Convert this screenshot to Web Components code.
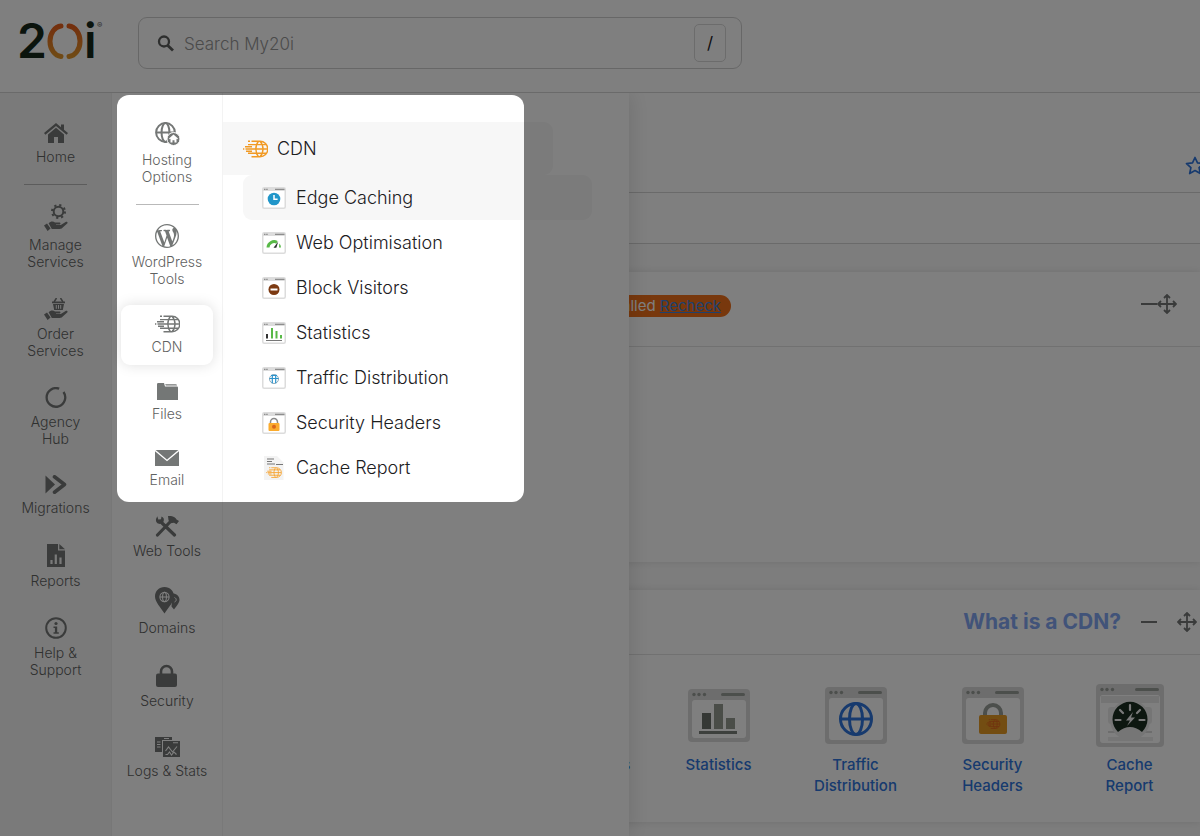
<!DOCTYPE html>
<html lang="en">
<head>
<meta charset="utf-8">
<meta name="viewport" content="width=device-width, initial-scale=1">
<title>My20i – CDN</title>
<style>
  html, body { margin: 0; }
  body { font-family: Inter, "Open Sans", sans-serif; color: #1c201e; background: #fbfbfb; overflow: hidden; }
</style>
</head>
<body>
<my-app></my-app>

<script>
const globe = (cx, cy, r, w) => `<g fill="none" stroke="currentColor" stroke-width="${w}">
  <circle cx="${cx}" cy="${cy}" r="${r}"/><ellipse cx="${cx}" cy="${cy}" rx="${r * 0.42}" ry="${r}"/>
  <path d="M${cx - r} ${cy}H${cx + r}"/></g>`;

const hand = `<path d="M0 19.5l3-2 3.6 5-3 2.5zM4.6 17.2c2-2 4.600-2 6.400-.8h4.500c1.300 0 1.300 2 0 2h-3.500v.7h4.800l4.800-3.200c1.300-.8 2.600.5 1.600 1.600l-5 4.600c-.8.7-1.500.9-2.500.9H7.800z"/>`;

const fastGlobe = `<g fill="none" stroke="currentColor" stroke-width="1.4">
  <path d="M8.500 1.200H17a7.800 7.800 0 0 1 0 15.600H8.500M17 1.200c4 4 4 11.600 0 15.600M15.500 1.200c-3.500 4-3.500 11.600 0 15.600"/>
  <path d="M5 4.600h18M2.500 9h22M5 13.300h18M0 9h1.300M2 6.800h7M3 11.200h6M5 1.200h2"/></g>`;

/* Small browser-window frame shared by the CDN menu icons. */
const win = inner => `<rect x=".75" y=".75" width="22.500" height="20.500" rx="1.500" fill="#fff" stroke="#dcdcdc" stroke-width="1.500"/>
  <path d="M1 1h22v3H1z" fill="#dcdcdc"/><path d="M2 2.300h1.500M4.200 2.300h1.500M13 2.300h9.500" stroke="#8d8d8d" stroke-width="1.200"/>${inner}`;

/* Large browser-window frame for the dashboard tiles. */
const bigWin = (w, h, inner) => `<rect width="${w}" height="${h}" rx="4" fill="#dadada"/>
  <rect x="4" y="11" width="${w - 8}" height="${h - 15}" rx="3" fill="#fff"/>
  <g fill="#999e99"><circle cx="6" cy="5.500" r="1.700"/><circle cx="11" cy="5.500" r="1.700"/><circle cx="16.500" cy="5.500" r="1.700"/>
  <rect x="${w - 29}" y="4" width="24" height="3" rx="1.500"/></g>${inner}`;

const ICONS = {
  home: [24, 20, `<path d="M12 0l5 4.200V1.500h3v5.200l4 3.400-1.400 1.700L12 3 1.400 11.800 0 10.100z"/><path d="M12 4.800l8 6.700V20h-6v-6h-4v6H4v-8.500z"/>`],
  manage: [24, 27, `<g fill="none" stroke="currentColor"><circle cx="14.500" cy="7.500" r="4.800" stroke-width="2"/><circle cx="14.500" cy="7.500" r="6.500" stroke-width="2" stroke-dasharray="2.200 2.900"/></g><g transform="translate(0 2)">${hand}</g>`],
  order: [24, 22, `<path d="M8 3.500h13v1.800H8zM9 6h11l-1.200 6h-8.600z"/><path d="M10 4l2.500-4M19 4l-2.500-4" fill="none" stroke="currentColor" stroke-width="1.500"/><path d="M12.300 7v3.800M14.500 7v3.800M16.700 7v3.800" stroke="#f4f4f4" stroke-width="1"/><g transform="translate(0 -3)">${hand}</g>`],
  agency: [22, 21, `<path d="M14.200 1.700A9.300 9.300 0 1 0 18.500 5" fill="none" stroke="currentColor" stroke-width="2.300"/>`],
  migrations: [22, 19, `<path d="M.5.500L10 9.500.5 18.500z"/><path d="M9.500 1.800L19.500 9.500l-10 7.700" fill="none" stroke="currentColor" stroke-width="3.600" stroke-linecap="round" stroke-linejoin="round"/>`],
  reports: [18, 23, `<path d="M0 0h11v6.500h7V23H0z"/><path d="M12.300 0L18 5.300h-5.700z"/><path d="M4.500 20v-4M8.800 20V10.500M13.500 20v-6.500" stroke="#f4f4f4" stroke-width="2.200"/>`],
  help: [22, 22, `<circle cx="11" cy="11" r="9.800" fill="none" stroke="currentColor" stroke-width="2"/><circle cx="11" cy="6.500" r="1.600"/><path d="M8.500 9.500h3.700v5.700h1.600v1.500H8.500v-1.500h1.400V11H8.500z"/>`],
  hosting: [25, 24, `${globe(10.5, 10.5, 9.4, 2)}<circle cx="18.500" cy="17" r="6.500" stroke="#fff"/><path d="M18.500 12.500l4.500 4-.7.8-.8-.6v3.800h-2v-2.200h-2v2.200h-2v-3.800l-.8.6-.7-.8z" fill="#fff"/>`],
  wordpress: [24, 24, `<path transform="scale(1.200)" d="M20 10c0-5.510-4.490-10-10-10C4.480 0 0 4.490 0 10c0 5.520 4.480 10 10 10 5.510 0 10-4.480 10-10zM7.780 15.370L4.370 6.220c.55-.02 1.170-.08 1.170-.08.5-.06.44-1.130-.06-1.110 0 0-1.450.11-2.370.11-.18 0-.37 0-.58-.01C4.120 2.690 6.870 1.110 10 1.110c2.330 0 4.450.87 6.050 2.340-.68-.11-1.650.39-1.650 1.580 0 .74.45 1.360.9 2.100.35.610.55 1.360.55 2.460 0 1.490-1.400 5-1.400 5l-3.030-8.370c.54-.02.82-.17.82-.17.5-.05.44-1.250-.06-1.220 0 0-1.440.12-2.380.12-.87 0-2.330-.12-2.330-.12-.5-.03-.56 1.200-.06 1.220l.92.08 1.260 3.410zM17.410 10c.24-.64.74-1.870.43-4.250.7 1.290 1.050 2.710 1.050 4.250 0 3.290-1.730 6.240-4.400 7.780.97-2.590 1.940-5.200 2.920-7.780zM6.100 18.090C3.120 16.650 1.110 13.530 1.110 10c0-1.300.23-2.480.72-3.590C3.250 10.300 4.670 14.200 6.100 18.090zm4.030-6.630l2.580 6.980c-.86.29-1.760.45-2.710.45-.79 0-1.570-.11-2.290-.33.810-2.380 1.620-4.740 2.420-7.100z"/>`],
  cdn: [25, 18, fastGlobe],
  files: [21, 17, `<path d="M0 1.200Q0 0 1.200 0H7l1 3.500h12Q21 3.500 21 4.700V17H0z"/><path d="M8.200 1.300H18.500q1.500 0 1.500 1.200H8.800z"/>`],
  email: [24, 16, `<path d="M0 0h24v16H0z"/><path d="M0 .3L12 10.500 24 .3" fill="none" stroke="#fff" stroke-width="1.300"/>`],
  tools: [24, 21, `<path d="M2.500 19l13-13.500M19.500 19L7 7" fill="none" stroke="currentColor" stroke-width="3.200" stroke-linecap="round"/><path d="M13 0c4-.5 7.500 1 8.500 3.500L24 5l-2.500 3.300-2.500-1.500-3.500.4-2-3z"/><path d="M2.300.3l1 3.200L6 3.200 6.500.6C9 1.700 9.500 4 8.300 6L6 7.800C2.800 8.300.5 6.500 1 3z"/>`],
  domains: [25, 27, `<path d="M17.500 6.500c4 0 7 2.500 7 6.300 0 3-3 6.500-5.500 9.700l-2.500-3z"/><path d="M9.500 0C15 0 19 4 19 9.500 19 15 13.500 20 9.500 26.500 5.500 20 0 15 0 9.500 0 4 4 0 9.500 0z"/><g color="#fff">${globe(9.5, 10, 4.6, 1.1)}</g><path d="M19.500 10.500c2.500 1 2 4 0 4.500" stroke="#fff" fill="none"/>`],
  security: [22, 23, `<rect y="9.500" width="21" height="13.500" rx="2"/><path d="M5 10.500V7.500a5.500 5.500 0 0 1 11 0v3" fill="none" stroke="currentColor" stroke-width="2.600"/>`],
  logs: [25, 20, `<path d="M0 0h17v3H7v12H0z"/><path d="M2 5h3.500M2 7.500h3.500M2 10h3.500M9 1.500h5" stroke="#fff" stroke-width="1"/><path d="M8 4h17v16H8z"/><path d="M10.500 14l3-4 4 5 4.500-5.500M10.500 17.500h2l2-2.500 2 3 2.500-3 2.500 2.500M18 5.700h5" fill="none" stroke="#fff" stroke-width="1.100"/>`],
  search: [18, 17, `<circle cx="7" cy="6.500" r="5" fill="none" stroke="currentColor" stroke-width="2.300"/><path d="M10.500 10.200l5.500 5.300" stroke="currentColor" stroke-width="2.800"/>`],
  star: [20, 20, `<path d="M10 1.500l2.500 5.400 6 .7-4.400 4 1.200 5.900-5.300-2.900-5.300 2.900 1.200-5.900-4.400-4 6-.7z" fill="none" stroke="currentColor" stroke-width="1.700" stroke-linejoin="round"/>`],
  minus: [16, 20, `<path d="M0 10h16" stroke="currentColor" stroke-width="2"/>`],
  move: [20, 20, `<path d="M10 1.500v17M1.500 10h17M7 4l3-3 3 3M7 16l3 3 3-3M4 7l-3 3 3 3M16 7l3 3-3 3" fill="none" stroke="currentColor" stroke-width="1.800"/>`],

  edge: [24, 22, win(`<circle cx="12" cy="12" r="6.300" fill="#2196c9"/><path d="M12 8v4.300h3.600" fill="none" stroke="#fff" stroke-width="1.500"/>`)],
  optimise: [24, 22, win(`<path d="M6 15.500a6.200 6.200 0 0 1 9-5.200" fill="none" stroke="#58b947" stroke-width="3"/><path d="M11.500 15.800l4.800-6.300-2 6.300z" fill="#2b332e"/><path d="M17.300 11.500a6 6 0 0 1 1.700 4h-2z" fill="#58b947"/>`)],
  block: [24, 22, win(`<circle cx="12" cy="12.500" r="5.500" fill="#7c3a12"/><path d="M8.500 12.500h7" stroke="#fff" stroke-width="2"/>`)],
  stats: [24, 22, win(`<path d="M5 12v4.500" stroke="#333" stroke-width="2"/><path d="M10 6v10.500M14.500 9v7.500M19 13v3.500" stroke="#58b947" stroke-width="2"/><path d="M4 18.500h16" stroke="#777"/>`)],
  traffic: [24, 22, win(`<g fill="none" stroke="#2b93cc" stroke-width="1.200"><circle cx="12" cy="12" r="4.500" stroke="#8aa9ba" stroke-width="1"/><path d="M7.500 11.500h9M10.300 7.700v8.500M13.700 7.700v8.500M9 8.500h6"/></g>`)],
  headers: [24, 22, win(`<path d="M8.500 12V10a3.500 3.500 0 0 1 7 0v2" fill="none" stroke="#8a8a8a" stroke-width="1.500"/><rect x="6.500" y="11" width="11" height="8" rx="1" fill="#fbab2d"/><circle cx="12" cy="14.800" r="2" fill="#d9661b"/>`)],
  report: [24, 24, `<path d="M2 0h13l6.500 6.500V24H2z" fill="#f3f3f3"/><path d="M5 3h7M5 5.500h5M5 8h8M14 8.500h7" stroke="#777" stroke-width="1.100"/><g color="#f7a12b" transform="translate(4 11) scale(.620)">${fastGlobe}</g>`],

  bigStats: [62, 53, bigWin(62, 53, `<rect x="14" y="24" width="9" height="16" fill="#6a706b"/><rect x="26" y="15" width="9" height="25" fill="#949b90"/><rect x="38" y="29" width="9" height="11" fill="#949b90"/><path d="M11 43.500h38" stroke="#7b807b" stroke-width="3"/>`)],
  bigTraffic: [62, 57, bigWin(62, 57, `<g color="#2e75dc">${globe(31, 32, 15.5, 3)}</g>`)],
  bigHeaders: [62, 57, bigWin(62, 57, `<path d="M23 29v-3a8 8 0 0 1 16 0v3" fill="none" stroke="#999e99" stroke-width="4"/><rect x="17" y="28" width="28" height="19" rx="2" fill="#e69a24"/><g color="#e2611d" transform="translate(24 32) scale(.560)">${fastGlobe}</g>`)],
  bigReport: [68, 63, bigWin(68, 63, `<path d="M5 12h58v7H5z" fill="#e8e8e8"/><rect x="12" y="23" width="44" height="17" rx="3" fill="#ebebeb"/><path d="M12 48h16M44 48h12" stroke="#dadada" stroke-width="2"/><path d="M12 55h45" stroke="#ececec" stroke-width="4"/><circle cx="34" cy="36" r="20" fill="#ececec"/><path d="M22 48a17.500 17.500 0 1 1 24 0q-12-10-24 0z" fill="#1b2e21"/><path d="M34 21v5M19.500 36h5M43.500 36h5M24 26l3 3M44 26l-3 3" stroke="#f4f4f4" stroke-width="2.200" stroke-linecap="round"/><path d="M37 28l-7 8.500h4L31 42l8-8.500h-4z" fill="#f4f4f4"/>`)]
};

class MyIcon extends HTMLElement {
  connectedCallback() {
    const [w, h, body] = ICONS[this.getAttribute('name')];
    this.attachShadow({ mode: 'open' }).innerHTML = `
      <style>:host { display: inline-flex; flex: none; } svg { display: block; }</style>
      <svg width="${w}" height="${h}" viewBox="0 0 ${w} ${h}" fill="currentColor" aria-hidden="true">${body}</svg>`;
  }
}

class MyLogo extends HTMLElement {
  connectedCallback() {
    this.attachShadow({ mode: 'open' }).innerHTML = `
      <style>
        :host { display: block; }
        a { display: block; color: #16291b; }
        svg { display: block; }
        text { font-family: Inter, sans-serif; font-weight: 600; }
      </style>
      <a href="#" aria-label="20i home"><svg width="92" height="64" viewBox="-4 -12 92 64" fill="currentColor">
        <defs><linearGradient id="g" x1="0" y1="0" x2="0" y2="1"><stop offset="0" stop-color="#e8601c"/><stop offset="1" stop-color="#e0952a"/></linearGradient></defs>
        <text x="-3" y="37" font-size="48">2</text>
        <path d="M41 5a12 15.300 0 0 0 0 30.500M49 5a12 15.300 0 0 1 0 30.500" fill="none" stroke="url(#g)" stroke-width="5" stroke-linecap="round"/>
        <text x="64" y="37" font-size="48">i</text>
        <text x="77" y="7" font-size="8" fill="#666">®</text>
      </svg></a>`;
  }
}

class MyHeader extends HTMLElement {
  connectedCallback() {
    this.attachShadow({ mode: 'open' }).innerHTML = `
      <style>
        :host { display: flex; align-items: center; gap: 30px; height: 92px; padding: 0 16px; background: #fff; border-bottom: 1px solid #d4d4d4; }
        my-logo { margin-bottom: 10px; }
        form { flex: 1; max-width: 604px; height: 52px; box-sizing: border-box; margin: 0 0 6px; padding: 0 15px 0 18px; display: flex; align-items: center; gap: 9px; border: 1px solid #cfcfcf; border-radius: 9px; color: #5c5e5d; }
        input { flex: 1; min-width: 0; border: 0; outline: 0; padding: 1px 0 0; background: none; font: 300 17px Inter, sans-serif; color: inherit; }
        input::placeholder { color: #969696; opacity: 1; }
        kbd { width: 30px; height: 36px; display: grid; place-items: center; border: 1px solid #d8d8d8; border-radius: 5px; font: 400 17px Inter, sans-serif; color: #1c201e; }
      </style>
      <my-logo></my-logo>
      <form role="search"><my-icon name="search"></my-icon><input type="text" placeholder="Search My20i" aria-label="Search My20i"><kbd>/</kbd></form>`;
  }
}

class NavItem extends HTMLElement {
  connectedCallback() {
    this.attachShadow({ mode: 'open' }).innerHTML = `
      <style>
        :host { display: block; border-radius: 9px; }
        :host([active]) { background: #fff; box-shadow: 0 0 14px rgba(0, 0, 0, .13); }
        a { display: flex; flex-direction: column; align-items: center; gap: 5px; padding: 10px 0; color: #747776; text-decoration: none; font-size: 14px; font-weight: 300; line-height: 17px; text-align: center; }
        span { color: #5f6261; }
      </style>
      <a href="#"><my-icon name="${this.getAttribute('icon')}"></my-icon><span><slot></slot></span></a>`;
  }
}

class NavColumn extends HTMLElement {
  connectedCallback() {
    this.attachShadow({ mode: 'open' }).innerHTML = `
      <style>
        :host { display: block; box-sizing: border-box; padding: 20px 9px 0; }
        nav { display: flex; flex-direction: column; gap: 8px; }
        ::slotted(hr) { width: 63px; height: 1px; margin: 1px auto; border: 0; background: #b9b9b9; }
      </style>
      <nav><slot></slot></nav>`;
  }
}

class MenuRow extends HTMLElement {
  connectedCallback() {
    this.attachShadow({ mode: 'open' }).innerHTML = `
      <style>
        :host { display: block; margin: 0 37px 0 20px; border-radius: 9px; }
        :host([active]) { background: #f7f7f7; }
        :host([heading]) { margin: 0 76px 0 0; border-radius: 0 9px 9px 0; background: #f7f7f7; }
        a { display: flex; align-items: center; gap: 10px; height: 45px; padding-left: 19px; color: #1c201e; text-decoration: none; font-size: 18px; font-weight: 300; line-height: 22px; }
        :host([heading]) a { height: 53px; padding-left: 20px; gap: 9px; }
        :host([heading]) my-icon { color: #f19a25; }
      </style>
      <a href="#"><my-icon name="${this.getAttribute('icon')}"></my-icon><slot></slot></a>`;
  }
}

class FlyoutMenu extends HTMLElement {
  connectedCallback() {
    this.attachShadow({ mode: 'open' }).innerHTML = `
      <style>
        :host { display: grid; grid-template-columns: 111px 406px; background: #fff; box-shadow: 0 0 22px rgba(0, 0, 0, .14); clip-path: inset(0 -30px 0 0); }
        nav-column { border-right: 1px solid #f3f3f3; padding-top: 19px; }
        section { padding-top: 29px; }
      </style>
      <nav-column>
        <nav-item icon="hosting">Hosting<br>Options</nav-item><hr>
        <nav-item icon="wordpress">WordPress<br>Tools</nav-item>
        <nav-item icon="cdn" active>CDN</nav-item>
        <nav-item icon="files">Files</nav-item>
        <nav-item icon="email">Email</nav-item>
        <nav-item icon="tools">Web Tools</nav-item>
        <nav-item icon="domains">Domains</nav-item>
        <nav-item icon="security">Security</nav-item>
        <nav-item icon="logs">Logs &amp; Stats</nav-item>
      </nav-column>
      <section>
        <menu-row icon="cdn" heading>CDN</menu-row>
        <menu-row icon="edge" active>Edge Caching</menu-row>
        <menu-row icon="optimise">Web Optimisation</menu-row>
        <menu-row icon="block">Block Visitors</menu-row>
        <menu-row icon="stats">Statistics</menu-row>
        <menu-row icon="traffic">Traffic Distribution</menu-row>
        <menu-row icon="headers">Security Headers</menu-row>
        <menu-row icon="report">Cache Report</menu-row>
      </section>`;
  }
}

class DashCard extends HTMLElement {
  connectedCallback() {
    this.attachShadow({ mode: 'open' }).innerHTML = `
      <style>
        :host { display: block; margin-top: 28px; background: #fff; box-shadow: 0 0 8px rgba(0, 0, 0, .11); }
        header { display: flex; align-items: center; gap: 20px; height: 64px; padding-right: 3px; border-bottom: 1px solid #e2e2e2; }
        .lead { flex: 1; }
        .tools { display: flex; gap: 20px; }
        button { padding: 0; border: 0; background: none; color: #747776; display: flex; }
        :host([compact]) header { height: 74px; padding-right: 23px; }
        :host([compact]) .tools { gap: 0; padding-bottom: 10px; }
        .body { min-height: 215px; }
        :host(:not([compact])) .body { min-height: 167px; }
      </style>
      <header>
        <div class="lead"><slot name="title"></slot></div>
        <div class="tools"><button type="button" aria-label="Collapse"><my-icon name="minus"></my-icon></button><button type="button" aria-label="Move"><my-icon name="move"></my-icon></button></div>
      </header>
      <div class="body"><slot></slot></div>`;
  }
}

class StatusPill extends HTMLElement {
  connectedCallback() {
    this.attachShadow({ mode: 'open' }).innerHTML = `
      <style>
        :host { display: flex; justify-content: flex-end; width: 619px; padding-bottom: 6px; box-sizing: border-box; }
        p { margin: 0; padding: 0 10px; border-radius: 11px; background: #f0701a; color: #fff; font-size: 15px; line-height: 22px; }
        a { color: #3f83dd; }
      </style>
      <p><slot></slot> <a href="#">Recheck</a></p>`;
  }
}

class AppTile extends HTMLElement {
  connectedCallback() {
    this.attachShadow({ mode: 'open' }).innerHTML = `
      <style>
        :host { display: block; width: 137px; flex: none; }
        a { display: flex; flex-direction: column; align-items: center; gap: 5px; color: #2e75dc; text-decoration: none; text-align: center; font-size: 15px; font-weight: 500; line-height: 21px; }
        .pic { height: 68px; display: flex; align-items: center; }
      </style>
      <a href="#"><span class="pic"><my-icon name="${this.getAttribute('icon')}"></my-icon></span><span><slot></slot></span></a>`;
  }
}

class MyApp extends HTMLElement {
  connectedCallback() {
    this.attachShadow({ mode: 'open' }).innerHTML = `
      <style>
        :host { display: block; position: relative; min-height: 100vh; overflow: hidden; }
        .shell { position: relative; display: grid; grid-template-columns: 112px 1fr; min-height: calc(100vh - 93px); }
        .primary { position: relative; z-index: 1; background: #f5f5f5; border-right: 1px solid #eee; }
        flyout-menu { position: absolute; top: 0; bottom: 0; left: 112px; }
        main { min-width: 0; }
        .title { height: 99px; display: flex; justify-content: flex-end; align-items: flex-end; background: #fff; border-bottom: 1px solid #d4d4d4; }
        .title button { margin: 0 -5px 16px 0; padding: 0; border: 0; background: none; color: #2e75dc; display: flex; }
        .crumbs { height: 50px; background: #fff; border-bottom: 1px solid #d4d4d4; }
        h2 { margin: 0; text-align: right; font-size: 21px; line-height: 26px; font-weight: 700; }
        h2 a { color: #82a6f2; text-decoration: none; }
        .tiles { display: flex; justify-content: flex-end; padding: 26px 2px 26px 0; }
        /* Guided-tour spotlight: one lit window, everything round it dimmed. */
        .spotlight { position: absolute; z-index: 2; left: 117px; top: 95px; width: 407px; height: 407px; border-radius: 12px; box-shadow: 0 0 0 200vmax rgba(0, 0, 0, .5); pointer-events: none; }
      </style>
      <my-header></my-header>
      <div class="shell">
        <nav-column class="primary">
          <nav-item icon="home">Home</nav-item><hr>
          <nav-item icon="manage">Manage<br>Services</nav-item>
          <nav-item icon="order">Order<br>Services</nav-item>
          <nav-item icon="agency">Agency<br>Hub</nav-item>
          <nav-item icon="migrations">Migrations</nav-item>
          <nav-item icon="reports">Reports</nav-item>
          <nav-item icon="help">Help &amp;<br>Support</nav-item>
        </nav-column>
        <main>
          <div class="title"><button type="button" aria-label="Favourite"><my-icon name="star"></my-icon></button></div>
          <div class="crumbs"></div>
          <dash-card compact><status-pill slot="title">Not installed</status-pill></dash-card>
          <dash-card>
            <h2 slot="title"><a href="#">What is a CDN?</a></h2>
            <div class="tiles">
              <app-tile icon="bigStats">Block Visitors</app-tile>
              <app-tile icon="bigStats">Statistics</app-tile>
              <app-tile icon="bigTraffic">Traffic<br>Distribution</app-tile>
              <app-tile icon="bigHeaders">Security<br>Headers</app-tile>
              <app-tile icon="bigReport">Cache<br>Report</app-tile>
            </div>
          </dash-card>
        </main>
        <flyout-menu></flyout-menu>
      </div>
      <div class="spotlight"></div>`;
  }
}

customElements.define('my-icon', MyIcon);
customElements.define('my-logo', MyLogo);
customElements.define('my-header', MyHeader);
customElements.define('nav-item', NavItem);
customElements.define('nav-column', NavColumn);
customElements.define('menu-row', MenuRow);
customElements.define('flyout-menu', FlyoutMenu);
customElements.define('dash-card', DashCard);
customElements.define('status-pill', StatusPill);
customElements.define('app-tile', AppTile);
customElements.define('my-app', MyApp);
</script>
</body>
</html>
